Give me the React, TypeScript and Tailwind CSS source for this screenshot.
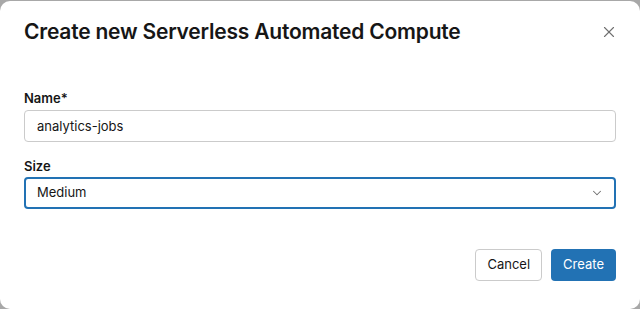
import { ChevronDown, X } from "lucide-react";

export default function App() {
  return (
    <div className="h-[309px] w-[640px] overflow-hidden bg-[#a8a8a8] pt-px font-['Inter',sans-serif]">
      <div className="flex h-[308px] flex-col rounded-[10px] bg-white px-6">
        <div className="flex items-center justify-between pt-[18px]">
          <h1 className="text-[21px] font-semibold leading-[26px] tracking-[-0.01em] text-[#161616]">
            Create new Serverless Automated Compute
          </h1>
          <button type="button" className="-mr-[2px] text-[#6f6f6f]">
            <X className="h-[18px] w-[18px]" strokeWidth={1.5} />
          </button>
        </div>

        <div className="mt-[45px] flex flex-col">
          <label className="text-[13px] font-semibold leading-[16px] text-[#161616]">Name*</label>
          <input
            defaultValue="analytics-jobs"
            className="mt-[4px] h-[32px] rounded-[4px] border border-[#cbcbcb] px-3 text-[13px] text-[#161616] outline-none"
          />

          <label className="mt-[16px] text-[13px] font-semibold leading-[16px] text-[#161616]">Size</label>
          <div className="mt-[3px] flex h-[32px] items-center justify-between rounded-[4px] border-2 border-[#2272b4] pl-[11px] pr-[10px] text-[13px] text-[#161616]">
            <span>Medium</span>
            <ChevronDown className="h-[14px] w-[14px] text-[#6f6f6f]" strokeWidth={1.75} />
          </div>
        </div>

        <div className="mt-[40px] flex justify-end gap-[9px]">
          <button
            type="button"
            className="h-[32px] rounded-[4px] border border-[#cbcbcb] bg-white px-[11px] text-[13px] text-[#161616]"
          >
            Cancel
          </button>
          <button
            type="button"
            className="h-[32px] rounded-[4px] bg-[#2272b4] px-3 text-[13px] text-white"
          >
            Create
          </button>
        </div>
      </div>
    </div>
  );
}
